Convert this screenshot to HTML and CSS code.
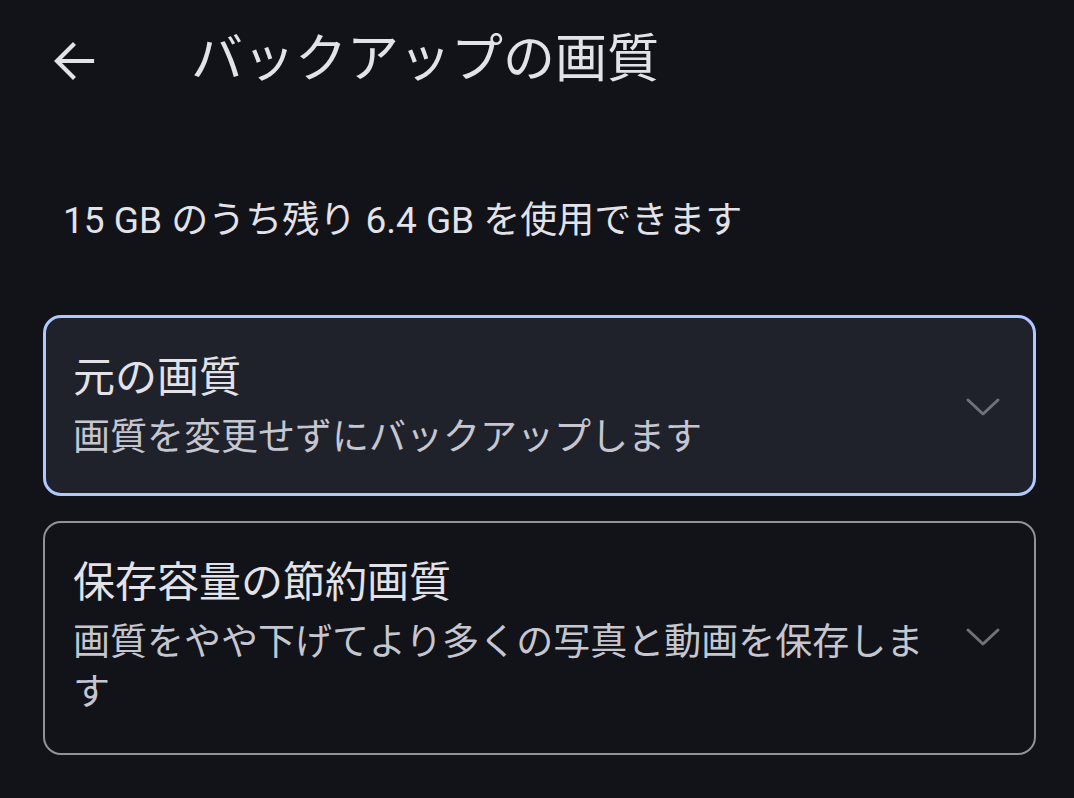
FILE: index.html
```html
<!DOCTYPE html>
<html lang="ja">
<head>
<meta charset="utf-8">
<title>バックアップの画質</title>
<link rel="stylesheet" href="styles.css">
</head>
<body>
<div class="page">
  <header class="topbar">
    <div class="back">
      <svg width="48" height="48" viewBox="0 0 48 48" aria-hidden="true">
        <path d="M43 24H9M24 8L8 24l16 16" fill="none" stroke="#e3e2e9" stroke-width="4.2" stroke-linecap="square" stroke-linejoin="miter"/>
      </svg>
    </div>
    <h1 class="title">バックアップの画質</h1>
  </header>
  <p class="storage">15 GB のうち残り 6.4 GB を使用できます</p>
  <div class="options">
    <div class="card selected">
      <div class="text">
        <div class="card-title">元の画質</div>
        <div class="card-sub">画質を変更せずにバックアップします</div>
      </div>
      <div class="chev">
        <svg width="36" height="20" viewBox="0 0 36 20" aria-hidden="true">
          <path d="M3 3l15 14L33 3" fill="none" stroke="#6f727b" stroke-width="3" stroke-linecap="round" stroke-linejoin="round"/>
        </svg>
      </div>
    </div>
    <div class="card">
      <div class="text">
        <div class="card-title">保存容量の節約画質</div>
        <div class="card-sub">画質をやや下げてより多くの写真と動画を保存します</div>
      </div>
      <div class="chev">
        <svg width="36" height="20" viewBox="0 0 36 20" aria-hidden="true">
          <path d="M3 3l15 14L33 3" fill="none" stroke="#6f727b" stroke-width="3" stroke-linecap="round" stroke-linejoin="round"/>
        </svg>
      </div>
    </div>
  </div>
</div>
</body>
</html>
```

FILE: styles.css
```css
html, body {
  margin: 0;
  padding: 0;
  background: #111318;
}
body {
  font-family: Roboto, "Noto Sans CJK JP", sans-serif;
  color: #e3e2e9;
}
.page {
  width: 1074px;
  height: 798px;
  box-sizing: border-box;
  padding: 0 38px 0 43px;
  overflow: hidden;
}
.topbar {
  display: flex;
  align-items: center;
  height: 120px;
}
.back {
  width: 48px;
  height: 48px;
  margin-left: 6px;
  margin-top: 2px;
}
.back svg { display: block; }
.title {
  margin: 0 0 0 94px;
  font-weight: 400;
  font-size: 52px;
  line-height: 60px;
  color: #e3e2e9;
}
.storage {
  margin: 79px 0 0 20px;
  font-size: 37px;
  line-height: 44px;
  color: #e3e2e9;
}
.options {
  margin-top: 72px;
  display: flex;
  flex-direction: column;
  gap: 25px;
}
.card {
  display: flex;
  align-items: center;
  border: 2px solid #909199;
  border-radius: 18px;
  padding: 33px 33px 35px 28px;
}
.card.selected {
  border: 3px solid #b0c8ff;
  background: #1f222b;
  padding: 33px 32px 30px 27px;
}
.text {
  flex: 1;
  min-width: 0;
  padding-right: 18px;
}
.card-title {
  font-size: 42px;
  line-height: 54px;
  color: #e3e2e9;
}
.card-sub {
  margin-top: 8px;
  font-size: 37px;
  line-height: 50px;
  color: #c5c6d0;
}
.chev {
  width: 36px;
  display: flex;
  justify-content: center;
}
.chev svg { display: block; }
```
